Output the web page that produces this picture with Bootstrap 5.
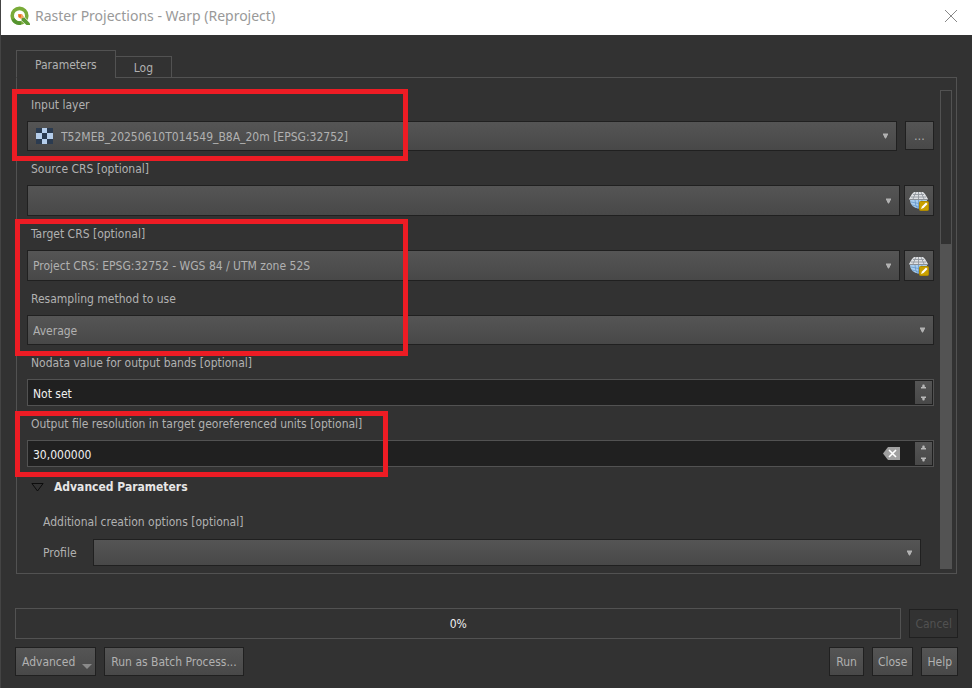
<!DOCTYPE html>
<html lang="en">
<head>
<meta charset="utf-8">
<meta name="viewport" content="width=device-width, initial-scale=1">
<title>Raster Projections - Warp (Reproject)</title>
<link rel="stylesheet" href="https://cdn.jsdelivr.net/npm/bootstrap@5.3.0/dist/css/bootstrap.min.css">
<style>
  :root { --bg: #323232; --line: #525252; --edge: #202020; --txt: #b1b1b1; --face: linear-gradient(#555, #484848); }
  body { background: var(--bg); color: var(--txt); font: 12px/16px "DejaVu Sans Condensed", "Noto Sans", sans-serif; border-left: 1px solid #444; }
  .titlebar { height: 35px; background: #fff; color: #999; font: 14px/20px "Noto Sans", "Open Sans", sans-serif; padding: 0 14px 3px 9px; }
  .close-btn { border: 0; background: none; padding: 0; line-height: 0; }
  .dialog-body { padding: 15px 14px 13px 14px; }
  .tab-strip { padding-left: 1px; margin-bottom: -1px; position: relative; z-index: 1; }
  .tab-btn { background: var(--bg); color: var(--txt); border: 1px solid var(--line); padding: 1px 18px 0; height: 22px; margin-left: -1px; }
  .tab-btn.current { height: 28px; border-bottom-color: var(--bg); margin-left: 0; }
  .pane { border: 1px solid var(--line); margin: 0 1px; padding: 12px 4px 4px 10px; }
  .fields { gap: 10px; padding: 7px 6px 3px 0; min-width: 0; }
  .field > label, .lbl { display: block; margin: 0 0 8px 4px; }
  .combo { appearance: none; width: 100%; height: 31px; color: var(--txt); border: 1px solid var(--edge); border-radius: 0; padding: 1px 24px 0 5px; outline: 0;
    background: url("data:image/svg+xml,%3Csvg xmlns='http://www.w3.org/2000/svg' width='7' height='6'%3E%3Cpath d='M1 .5h5v2h-1v2h-1v1h-1v-1h-1v-2h-1z' fill='%23b1b1b1'/%3E%3C/svg%3E") right 7px center no-repeat, var(--face); }
  .combo.short { height: 30px; }
  .combo.mini { height: 27px; }
  .combo.with-icon { padding-left: 33px; }
  .raster-icon { position: absolute; left: 9px; top: 7px; pointer-events: none; }
  .push { background: var(--face); color: var(--txt); border: 1px solid var(--edge); padding: 1px 5px 0; height: 29px; white-space: nowrap; }
  .push:disabled { background: var(--bg); color: #515151; }
  .push.roomy { padding: 1px 6px 0; }
  .push.square { width: 29px; padding: 0; }
  .push.crs { width: 30px; height: 31px; padding: 0; line-height: 0; }
  .spin { height: 27px; background: #202020; border: 1px solid var(--line); padding: 1px 1px 1px 0; }
  .spin input { background: none; border: 0; color: #f0f0f0; padding: 2px 0 0 5px; min-width: 0; outline: 0; }
  .spin button { border: 0; padding: 0; line-height: 0; color: #b8b8b8; }
  .steps { width: 17px; background: var(--face); }
  .steps button { background: none; flex: 1; }
  .clear-btn { background: none; margin-right: 15px; }
  .callout-box { position: absolute; border: 5px solid #ed1c24; pointer-events: none; z-index: 2; }
  .c-input { left: -15px; top: -8px; width: 396px; bottom: -10px; }
  .c-target { left: -12px; top: -7px; width: 393px; bottom: -11px; }
  .c-output { left: -12px; top: -5px; width: 373px; bottom: -10px; }
  .adv { margin: 2px 0 0 4px; }
  .adv-head { background: none; border: 0; padding: 0; color: #e6e6e6; font-weight: 700; gap: 10px; }
  .adv-body { padding: 19px 13px 0 12px; }
  .adv-body .lbl { margin: 0 0 9px; }
  .vscroll { width: 12px; }
  .vtrack { flex: 32; border: 1px solid var(--line); }
  .vthumb { flex: 68; background: #535353; }
  .progress-box { background: none; border: 1px solid var(--line); border-radius: 0; height: 31px; font-size: 12px; color: #f0f0f0; }
  .run-row { margin-top: 34px; }
  .menu-arrow { margin: 9px -3px 0 7px; }
</style>
<script src="https://cdn.jsdelivr.net/npm/bootstrap@5.3.0/dist/js/bootstrap.bundle.min.js"></script>
</head>
<body>
<svg class="d-none" aria-hidden="true">
  <symbol id="globe" viewBox="0 0 20 20">
    <path d="M1 9h17a8.500 8.500 0 0 1-17 0z" fill="#a9cdee"/>
    <path d="M2 11q8 3 15 0M3 14q6 3 13 0M6 9q0 6 3 9M13 9q0 5-3 8M9.500 9v8" fill="none" stroke="#5e92c6" stroke-width=".700"/>
    <path d="M5 1h9l2 2 3 5H0l3-5z" fill="#dfe1e4"/>
    <path d="M4 3.500h11M2 6h15M0 8.500h19M7 1 4 8M9.500 1v7M12 1l3 7" fill="none" stroke="#92979e" stroke-width=".900"/>
    <rect x="10.500" y="10.500" width="9" height="9" rx="1" fill="#c8a000" stroke="#b08a00"/>
    <path d="m12 18 1-2.500 4-4 1.500 1.500-4 4z" fill="#fff"/>
  </symbol>
  <symbol id="up" viewBox="0 0 6 5"><path d="M2 0h2v1h.500v2H6v2H0V3h1.500V1H2z" fill="currentColor"/></symbol>
  <symbol id="down" viewBox="0 0 6 5"><path d="M0 0h6v2H4.500v2H4v1H2V4h-.500V2H0z" fill="currentColor"/></symbol>
</svg>

<header class="titlebar d-flex align-items-center justify-content-between">
  <div class="d-flex align-items-center gap-1">
    <svg width="21" height="20" viewBox="0 0 21 20" aria-hidden="true">
      <circle cx="9.500" cy="9.700" r="7.300" fill="none" stroke="#79ab38" stroke-width="3.600"/>
      <path d="M3 13a7.300 7.300 0 0 0 8 3.900" fill="none" stroke="#559430" stroke-width="3.600"/>
      <path d="M9 10h5l6 7v2h-4l-7-6z" fill="#fff"/>
      <path d="M11.500 11.500h3l5.500 6V19h-3.500l-5-4.500z" fill="#5d9a33"/>
      <path d="M8 8h4l2 3-3 2-3-2z" fill="#f2a55e"/><path d="M8.500 8.500h2.500v3h-2z" fill="#e96d20"/>
    </svg>
    <span>Raster Projections - Warp (Reproject)</span>
  </div>
  <button class="close-btn" type="button" aria-label="Close window"><svg width="14" height="14" viewBox="0 0 14 14"><path d="m1 1 12 12M13 1 1 13" stroke="#888" fill="none"/></svg></button>
</header>

<main class="dialog-body">
  <div class="tab-strip d-flex align-items-end" role="tablist">
    <button class="tab-btn current" type="button" role="tab" aria-selected="true">Parameters</button>
    <button class="tab-btn" type="button" role="tab" aria-selected="false">Log</button>
  </div>

  <section class="pane d-flex">
    <form class="fields d-flex flex-column flex-grow-1">
      <div class="field position-relative">
        <label for="inLayer">Input layer</label>
        <div class="d-flex gap-2">
          <div class="position-relative flex-grow-1">
            <select id="inLayer" class="combo short with-icon d-block"><option>T52MEB_20250610T014549_B8A_20m [EPSG:32752]</option></select>
            <svg class="raster-icon" width="17" height="16" viewBox="0 0 3 3" preserveAspectRatio="none" shape-rendering="crispEdges" aria-hidden="true"><path fill="#2b3b50" d="M0 0h3v3H0z"/><path fill="#b5cdea" d="M1 0h1v1H1zM0 1h1v1H0zM2 1h1v1H2zM1 2h1v1H1z"/></svg>
          </div>
          <button class="push square" type="button" aria-label="Browse for layer">…</button>
        </div>
        <div class="callout-box c-input"></div>
      </div>

      <div class="field">
        <label for="srcCrs">Source CRS [optional]</label>
        <div class="d-flex gap-1">
          <select id="srcCrs" class="combo"><option></option></select>
          <button class="push crs flex-shrink-0" type="button" aria-label="Select source CRS"><svg width="20" height="20"><use href="#globe"/></svg></button>
        </div>
      </div>

      <div class="d-flex flex-column position-relative" style="gap: inherit">
        <div class="field">
          <label for="dstCrs">Target CRS [optional]</label>
          <div class="d-flex gap-1">
            <select id="dstCrs" class="combo"><option>Project CRS: EPSG:32752 - WGS 84 / UTM zone 52S</option></select>
            <button class="push crs flex-shrink-0" type="button" aria-label="Select target CRS"><svg width="20" height="20"><use href="#globe"/></svg></button>
          </div>
        </div>
        <div class="field">
          <label for="resamp">Resampling method to use</label>
          <select id="resamp" class="combo short d-block"><option>Average</option></select>
        </div>
        <div class="callout-box c-target"></div>
      </div>

      <div class="field">
        <label for="nodata">Nodata value for output bands [optional]</label>
        <div class="spin d-flex">
          <input id="nodata" class="flex-grow-1" type="text" value="Not set">
          <div class="steps d-flex flex-column">
            <button type="button" aria-label="Increase nodata value"><svg width="5" height="5"><use href="#up"/></svg></button>
            <button type="button" aria-label="Decrease nodata value"><svg width="5" height="5"><use href="#down"/></svg></button>
          </div>
        </div>
      </div>

      <div class="field position-relative">
        <label for="res">Output file resolution in target georeferenced units [optional]</label>
        <div class="spin d-flex">
          <input id="res" class="flex-grow-1" type="text" value="30,000000">
          <button class="clear-btn" type="button" aria-label="Clear value"><svg width="17" height="13" viewBox="0 0 17 13"><path d="M5 0h12v13H5L0 6.500z" fill="#a0a0a0"/><path d="m6 3 7 7M13 3l-7 7" stroke="#fff" stroke-width="1.600"/></svg></button>
          <div class="steps d-flex flex-column">
            <button type="button" aria-label="Increase resolution"><svg width="5" height="5"><use href="#up"/></svg></button>
            <button type="button" aria-label="Decrease resolution"><svg width="5" height="5"><use href="#down"/></svg></button>
          </div>
        </div>
        <div class="callout-box c-output"></div>
      </div>

      <div class="adv">
        <button class="adv-head d-flex align-items-center" type="button" aria-expanded="true"><svg width="13" height="9" viewBox="0 0 13 9"><path d="M.900.500h11.200L6.500 8z" fill="none" stroke="#0c0c0c"/></svg>Advanced Parameters</button>
        <div class="adv-body">
          <div class="lbl">Additional creation options [optional]</div>
          <div class="d-flex align-items-center">
            <label class="me-3" for="profile">Profile</label>
            <select id="profile" class="combo mini"><option></option></select>
          </div>
        </div>
      </div>
    </form>
    <div class="vscroll d-flex flex-column flex-shrink-0" aria-hidden="true"><div class="vtrack"></div><div class="vthumb"></div></div>
  </section>

  <div class="run-row d-flex align-items-center gap-2">
    <div class="progress-box flex-grow-1 d-flex align-items-center justify-content-center" role="progressbar" aria-valuenow="0" aria-valuemin="0" aria-valuemax="100" aria-label="Progress">0%</div>
    <button class="push" type="button" disabled>Cancel</button>
  </div>
  <div class="d-flex gap-2 mt-2">
    <button class="push roomy d-flex align-items-center" type="button">Advanced<svg class="menu-arrow" width="10" height="5" viewBox="0 0 10 5"><path d="M0 0h10L5 5z" fill="#8a8a8a"/></svg></button>
    <button class="push roomy" type="button">Run as Batch Process...</button>
    <button class="push roomy ms-auto" type="button">Run</button>
    <button class="push" type="button">Close</button>
    <button class="push" type="button">Help</button>
  </div>
</main>
</body>
</html>
